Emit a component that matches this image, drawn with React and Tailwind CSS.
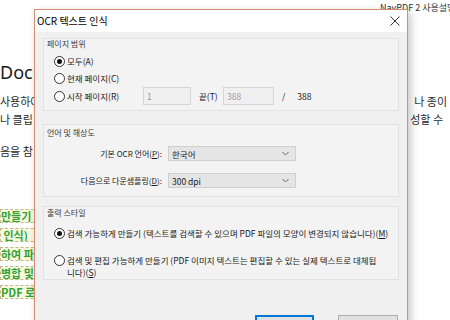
import React from "react";

const Radio = ({ checked }) => (
  <span className="w-[11px] h-[11px] rounded-full border border-[#333333] bg-white flex items-center justify-center shrink-0">
    {checked && <span className="w-[5px] h-[5px] rounded-full bg-[#111111]" />}
  </span>
);

const Chevron = () => (
  <svg width="7" height="5" viewBox="0 0 7 5" className="shrink-0">
    <path d="M0.5 1 L3.5 4 L6.5 1" fill="none" stroke="#666666" strokeWidth="1" />
  </svg>
);

const greens = ["만들기 (텍스트", " 인식)", "하여 파일", "병합 및", "PDF 로 변환"];

export default function App() {
  return (
    <div className="relative w-[450px] h-[320px] overflow-hidden bg-white font-['Noto_Sans_CJK_KR','Noto_Sans',sans-serif] text-[#1a1a1a]">
      {/* background document */}
      <div className="flex flex-col">
        <div className="h-[12px] mt-[2px] pl-[380px] text-[9px] leading-[12px] whitespace-nowrap text-[#333333]">
          NavPDF 2 사용설명서
        </div>
        <div className="mt-[47px] h-[22px] text-[18px] leading-[22px] font-['Noto_Sans',sans-serif] whitespace-nowrap text-[#1a1a1a]">
          Document
        </div>
        <div className="mt-[9px] flex justify-between h-[18px] text-[11px] leading-[18px] pr-[3px] text-[#2a2a2a]">
          <span>사용하여</span>
          <span>나 종이</span>
        </div>
        <div className="flex justify-between h-[18px] text-[11px] leading-[18px] pr-[7px] text-[#2a2a2a]">
          <span>나 클립</span>
          <span>성할 수</span>
        </div>
        <div className="mt-[14px] h-[18px] text-[11px] leading-[18px] text-[#2a2a2a]">음을 참</div>
        <div className="mt-[49px] flex flex-col gap-[5px]">
          {greens.map((t) => (
            <div
              key={t}
              className="h-[14px] w-[90px] border border-dashed border-[#c2b98a] bg-[#f6f8e2] text-[11px] leading-[12px] font-bold text-[#34a334] whitespace-pre overflow-hidden"
            >
              {t}
            </div>
          ))}
        </div>
      </div>

      {/* dialog */}
      <div className="absolute left-[34px] top-[9px] w-[374px] h-[345px] border border-[#d98b6e] bg-[#f0f0f0] shadow-[3px_3px_8px_rgba(0,0,0,0.22)] flex flex-col">
        <div className="h-[22px] bg-white flex items-center justify-between pl-[2px] pr-[7px] shrink-0">
          <span className="text-[10px] leading-[12px] text-black whitespace-nowrap">OCR 텍스트 인식</span>
          <svg width="10" height="10" viewBox="0 0 10 10">
            <path d="M0.5 0.5 L9.5 9.5 M9.5 0.5 L0.5 9.5" stroke="#333333" strokeWidth="1" />
          </svg>
        </div>

        <div className="flex flex-col px-[8px] pt-[6px] text-[8.5px] leading-[10px]">
          {/* panel 1 */}
          <div className="h-[73px] border border-[#e2e2e2] bg-[#f3f3f3] flex flex-col">
            <div className="h-[10px] ml-[3px] text-[8px] text-[#3a3a3a] whitespace-nowrap">페이지 범위</div>
            <div className="mt-[6px] h-[12px] ml-[10px] flex items-center gap-[2px]">
              <Radio checked />
              <span className="whitespace-nowrap">모두(A)</span>
            </div>
            <div className="mt-[5px] h-[12px] ml-[10px] flex items-center gap-[2px]">
              <Radio />
              <span className="whitespace-nowrap">현재 페이지(C)</span>
            </div>
            <div className="mt-[3px] h-[18px] ml-[10px] flex items-center">
              <Radio />
              <span className="ml-[2px] w-[76px] whitespace-nowrap">시작 페이지(R)</span>
              <div className="w-[48px] h-[18px] border border-[#d6d6d6] bg-[#f0f0f0] text-[#9a9a9a] pl-[3px] flex items-center">1</div>
              <span className="ml-[8px] w-[24px] whitespace-nowrap">끝(T)</span>
              <div className="w-[51px] h-[18px] border border-[#d6d6d6] bg-[#f0f0f0] text-[#9a9a9a] pl-[3px] flex items-center">388</div>
              <span className="ml-[8px]">/</span>
              <span className="ml-[12px]">388</span>
            </div>
          </div>

          {/* panel 2 */}
          <div className="mt-[13px] h-[73px] border border-[#e2e2e2] bg-[#f3f3f3] flex flex-col">
            <div className="mt-[3px] h-[10px] ml-[3px] text-[8px] text-[#3a3a3a] whitespace-nowrap">언어 및 해상도</div>
            <div className="mt-[8px] flex items-center h-[15px]">
              <span className="w-[118px] text-[8px] text-right whitespace-nowrap">
                기본 OCR 언어(<u className="underline-offset-1">P</u>):
              </span>
              <div className="ml-[6px] w-[128px] h-[15px] border border-[#cfcfcf] bg-[#e5e5e5] flex items-center justify-between pl-[3px] pr-[6px]">
                <span>한국어</span>
                <Chevron />
              </div>
            </div>
            <div className="mt-[12px] flex items-center h-[15px]">
              <span className="w-[118px] text-[8px] text-right whitespace-nowrap">
                다음으로 다운샘플링(<u className="underline-offset-1">D</u>):
              </span>
              <div className="ml-[6px] w-[128px] h-[15px] border border-[#cfcfcf] bg-[#e5e5e5] flex items-center justify-between pl-[3px] pr-[6px]">
                <span>300 dpi</span>
                <Chevron />
              </div>
            </div>
          </div>

          {/* panel 3 */}
          <div className="mt-[9px] h-[74px] border border-[#e2e2e2] bg-[#f3f3f3] flex flex-col">
            <div className="mt-[1px] h-[10px] ml-[3px] text-[8px] text-[#3a3a3a] whitespace-nowrap">출력 스타일</div>
            <div className="mt-[9px] h-[12px] ml-[10px] flex items-center gap-[2px]">
              <Radio checked />
              <span className="whitespace-nowrap">
                검색 가능하게 만들기 (텍스트를 검색할 수 있으며 PDF 파일의 모양이 변경되지 않습니다)(<u className="underline-offset-1">M</u>)
              </span>
            </div>
            <div className="mt-[15px] ml-[10px] flex items-start gap-[2px]">
              <span className="mt-[0.5px]">
                <Radio />
              </span>
              <span className="leading-[12px] whitespace-nowrap">
                검색 및 편집 가능하게 만들기 (PDF 이미지 텍스트는 편집할 수 있는 실제 텍스트로 대체됩
                <br />
                니다)(<u className="underline-offset-1">S</u>)
              </span>
            </div>
          </div>

          {/* buttons */}
          <div className="mt-[35px] flex justify-end gap-[24px] mr-[1px]">
            <div className="w-[59px] h-[22px] border-2 border-[#0078d7] bg-[#e1e1e1]" />
            <div className="w-[60px] h-[22px] border border-[#adadad] bg-[#e1e1e1]" />
          </div>
        </div>
      </div>
    </div>
  );
}
